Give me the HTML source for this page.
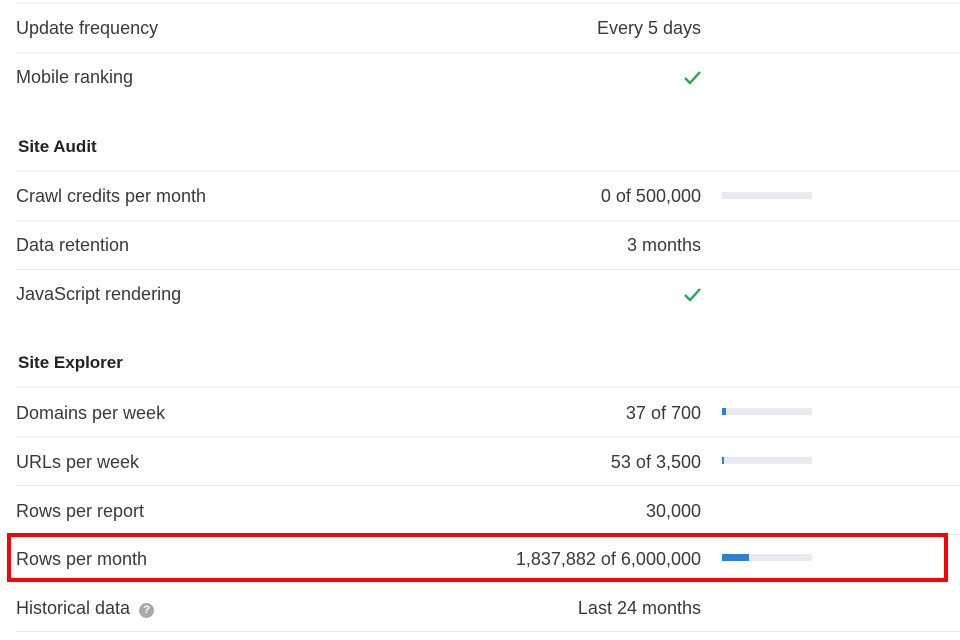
<!DOCTYPE html><html><head><style>
body{margin:0;width:960px;height:640px;background:#fff;position:relative;overflow:hidden;font-family:"Liberation Sans",sans-serif;font-size:18px;color:#3a3a3a}
.l{position:absolute;left:16px;right:0;height:1px;background:#e8e8e8}
.t{position:absolute;left:16px;line-height:20px}
.h{left:18px;font-weight:bold;font-size:17px;color:#222}
.v{position:absolute;right:259px;line-height:20px;text-align:right}
.b{position:absolute;left:722px;width:90px;height:7px;background:#e7eaef}
.b i{display:block;height:7px;background:#2e7fd3}
.ck{position:absolute;left:683px}
</style></head><body>
<div class="l" style="top:3px"></div>
<div class="t" style="top:18px">Update frequency</div><div class="v" style="top:18px">Every 5 days</div>
<div class="l" style="top:52px"></div>
<div class="t" style="top:67px">Mobile ranking</div>
<svg class="ck" style="top:69px" width="20" height="17"><path d="M2 9 L7 14 L17 3" stroke="#27a559" stroke-width="2.4" fill="none"/></svg>
<div class="t h" style="top:137px">Site Audit</div>
<div class="l" style="top:171px"></div>
<div class="t" style="top:186px">Crawl credits per month</div><div class="v" style="top:186px">0 of 500,000</div><div class="b" style="top:192px"></div>
<div class="l" style="top:220px"></div>
<div class="t" style="top:235px">Data retention</div><div class="v" style="top:235px">3 months</div>
<div class="l" style="top:269px"></div>
<div class="t" style="top:284px">JavaScript rendering</div>
<svg class="ck" style="top:286px" width="20" height="17"><path d="M2 9 L7 14 L17 3" stroke="#27a559" stroke-width="2.4" fill="none"/></svg>
<div class="t h" style="top:353px">Site Explorer</div>
<div class="l" style="top:387px"></div>
<div class="t" style="top:403px">Domains per week</div><div class="v" style="top:403px">37 of 700</div><div class="b" style="top:408px"><i style="width:4px"></i></div>
<div class="l" style="top:436px"></div>
<div class="t" style="top:452px">URLs per week</div><div class="v" style="top:452px">53 of 3,500</div><div class="b" style="top:457px"><i style="width:2px"></i></div>
<div class="l" style="top:485px"></div>
<div class="t" style="top:501px">Rows per report</div><div class="v" style="top:501px">30,000</div>
<div class="l" style="top:534px"></div>
<div class="t" style="top:549px">Rows per month</div><div class="v" style="top:549px">1,837,882 of 6,000,000</div><div class="b" style="top:554px"><i style="width:27px"></i></div>
<div style="position:absolute;left:7px;top:533px;width:933px;height:41px;border:4px solid #f00"></div>
<div class="t" style="top:598px">Historical data <span style="display:inline-block;width:15px;height:15px;border-radius:50%;background:#a9a9a9;color:#fff;font-size:11px;font-weight:bold;line-height:15px;text-align:center;vertical-align:1px;margin-left:4px">?</span></div><div class="v" style="top:598px">Last 24 months</div>
<div class="l" style="top:631px"></div>
</body></html>
